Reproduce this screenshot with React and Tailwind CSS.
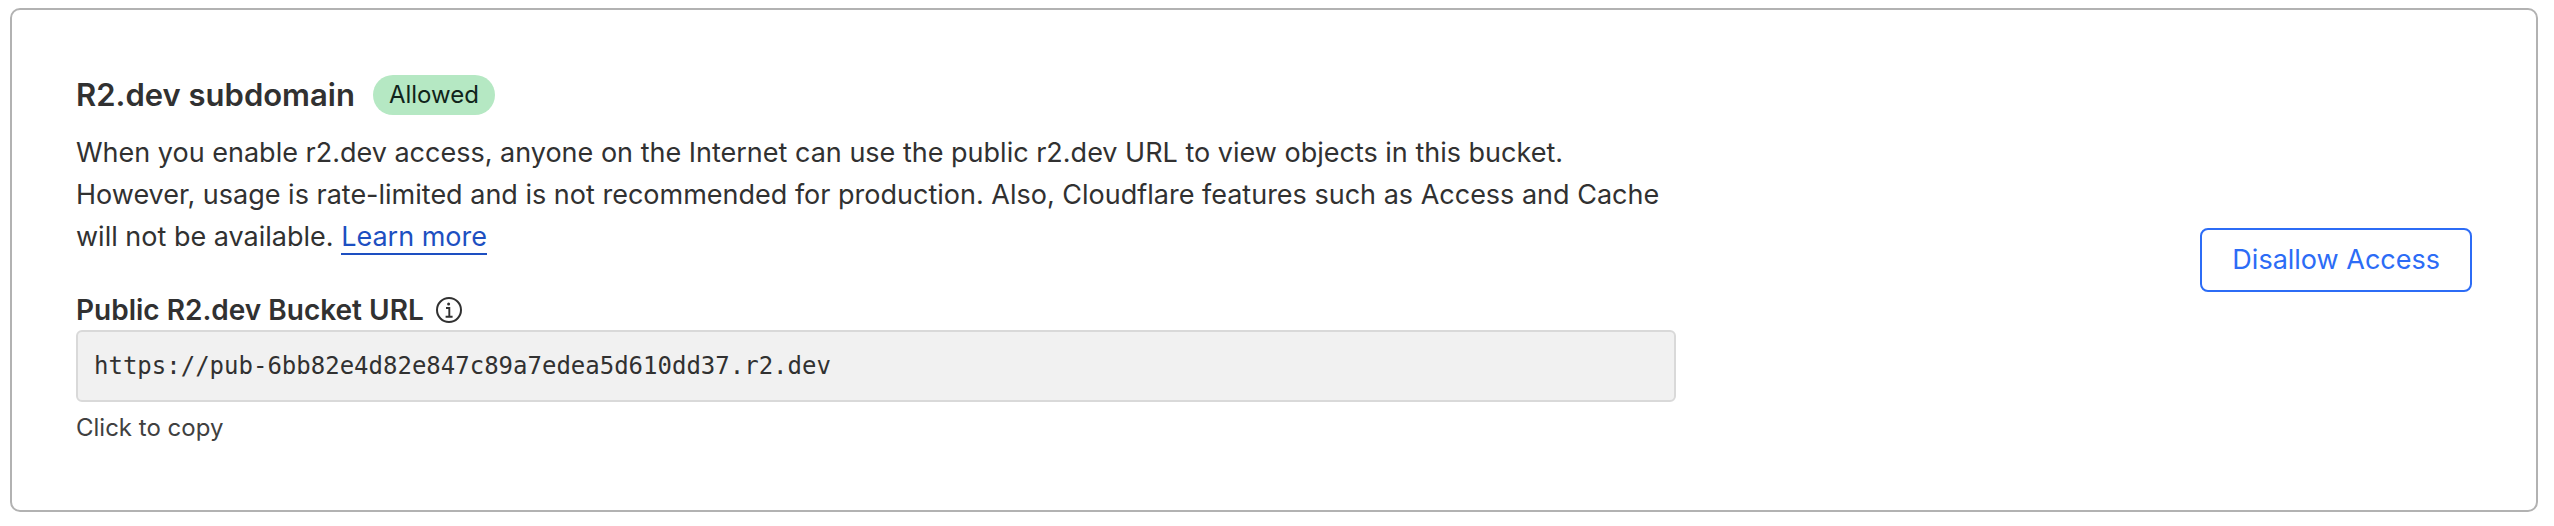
function InfoIcon() {
  return (
    <svg viewBox="0 0 26 26" className="size-[26px]" fill="none" stroke="currentColor" aria-hidden="true">
      <circle cx="13" cy="13" r="12" strokeWidth="2" />
      <circle cx="12.6" cy="7" r="1.5" fill="currentColor" stroke="none" />
      <path d="M10 11h3.3v8.6M9.6 19.8h7" strokeWidth="1.9" />
    </svg>
  );
}

export default function App() {
  return (
    <main className="bg-white pt-2 pr-4 pb-3 pl-2.5 font-['Inter',sans-serif] text-[#313131]">
      <section className="flex items-center justify-between gap-16 rounded-[10px] border-2 border-[#b2b2b2] p-16">
        <div className="w-full max-w-[1600px]">
          <div className="flex items-center gap-[18px]">
            <h2 className="text-[31px] leading-[42px] font-semibold">R2.dev subdomain</h2>
            <span className="rounded-full bg-[#b5e8c3] px-4 text-2xl leading-10 text-[#10241a]">Allowed</span>
          </div>
          <p className="mt-4 text-[27px] leading-[42px]">
            When you enable r2.dev access, anyone on the Internet can use the public r2.dev URL to view objects in
            this bucket. However, usage is rate-limited and is not recommended for production. Also, Cloudflare
            features such as Access and Cache will not be available.{" "}
            <a href="#learn-more" className="border-b-2 border-[#1d4fc1] text-[#1d4fc1]">Learn more</a>
          </p>
          <div className="mt-8 flex items-center gap-3">
            <label htmlFor="bucket-url" className="text-[28px] leading-10 font-semibold">
              Public R2.dev Bucket URL
            </label>
            <InfoIcon />
          </div>
          <input
            id="bucket-url"
            type="text"
            readOnly
            value="https://pub-6bb82e4d82e847c89a7edea5d610dd37.r2.dev"
            className="block h-[72px] w-full cursor-pointer rounded-md border-2 border-[#d9d9d9] bg-[#f1f1f1] px-4 font-['DejaVu_Sans_Mono',monospace] text-2xl outline-none"
          />
          <p className="mt-2 text-2xl leading-9 text-[#404040]">Click to copy</p>
        </div>
        <button
          type="button"
          className="h-16 shrink-0 rounded-lg border-2 border-[#2c6cf6] px-[30px] text-[27px] whitespace-nowrap text-[#2c6cf6]"
        >
          Disallow Access
        </button>
      </section>
    </main>
  );
}
